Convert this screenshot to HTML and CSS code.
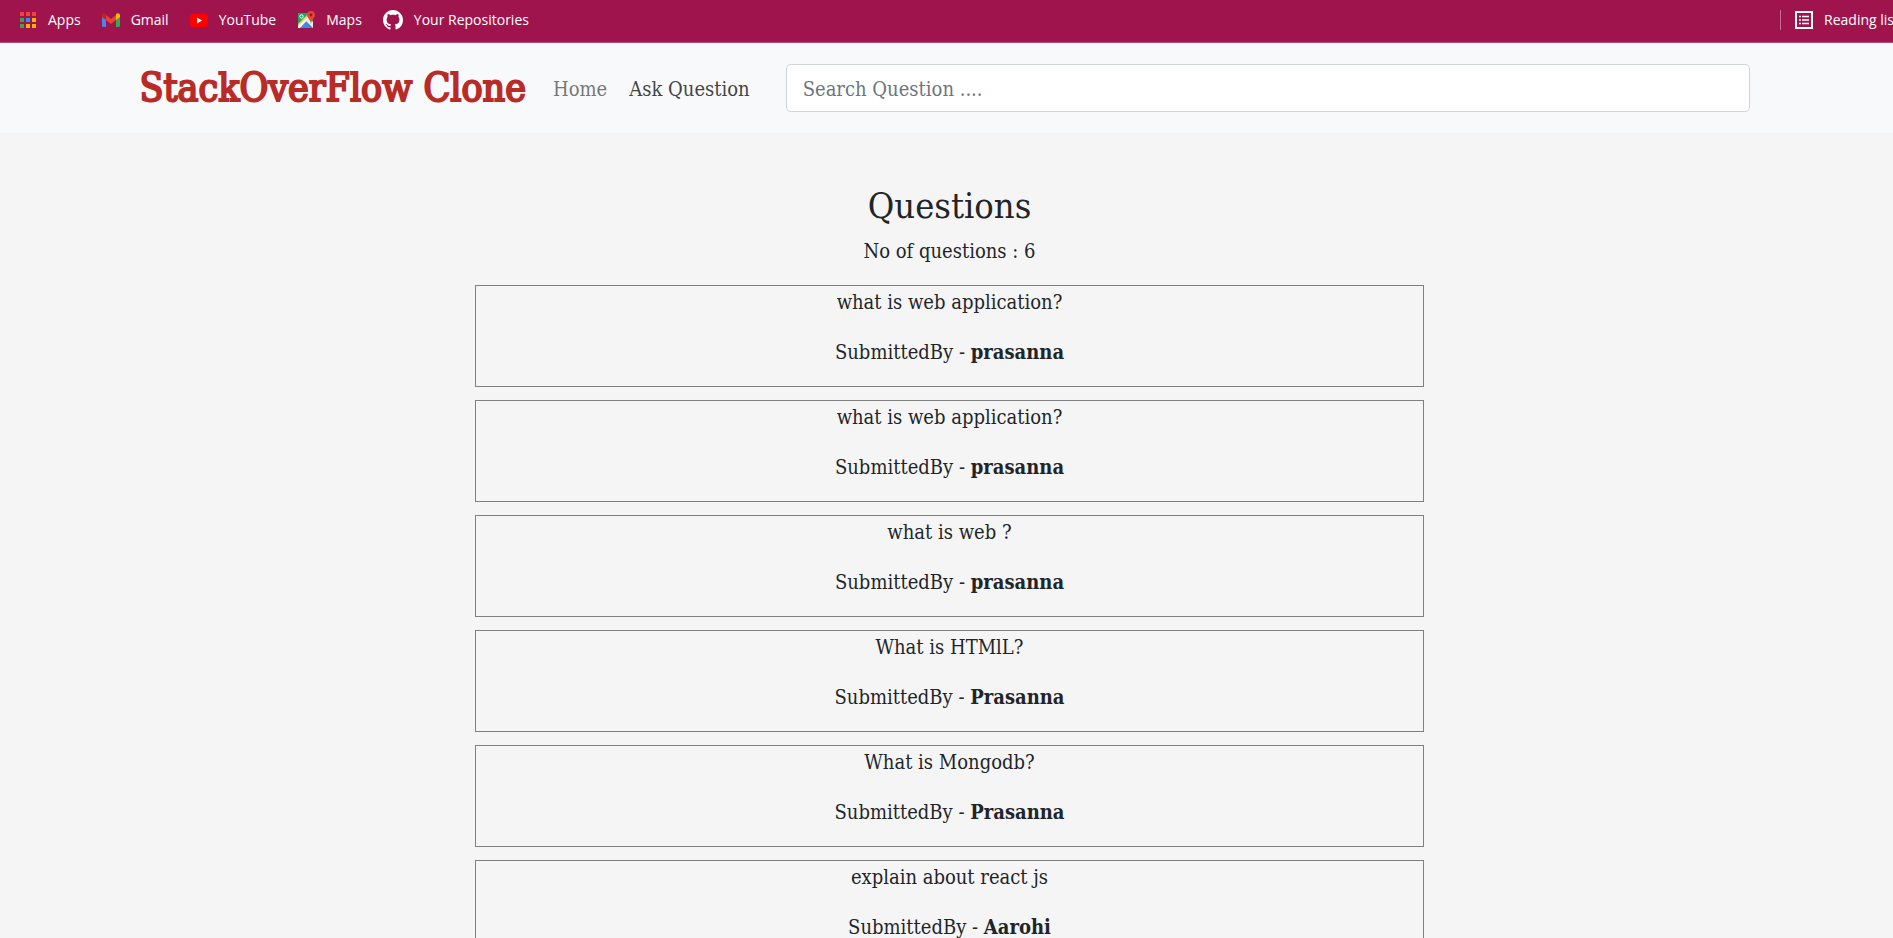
FILE: index.html
```html
<!DOCTYPE html>
<html lang="en">
<head>
<meta charset="utf-8">
<title>StackOverFlow Clone</title>
<link rel="stylesheet" href="styles.css">
</head>
<body>
<div class="page">
  <nav class="bookmarks" aria-label="Bookmarks">
    <a class="bookmark" href="#"><svg class="bookmark-icon" viewBox="0 0 18 18" aria-hidden="true"><path fill="#f44336" d="M1 1h4v4H1zM7 1h4v4H7zM13 1h4v4h-4z"/><path fill="#34a853" d="M1 7h4v4H1zM1 13h4v4H1z"/><path fill="#2196f3" d="M7 7h4v4H7z"/><path fill="#fbb30b" d="M13 7h4v4h-4zM7 13h4v4H7zM13 13h4v4h-4z"/></svg>Apps</a>
    <a class="bookmark" href="#"><svg class="bookmark-icon" viewBox="0 0 18 18" aria-hidden="true"><path fill="#4285f4" d="M0 5l4 3v8H1.300Q0 16 0 14.700z"/><path fill="#34a853" d="M18 5l-4 3v8h2.700q1.300 0 1.300-1.300z"/><path fill="#ea4335" d="M4 4l5 4 5-4v5l-5 4-5-4z"/><path fill="#c5221f" d="M0 6V4.500C0 2.300 2.200 1.600 4 3v6z"/><path fill="#fbbc04" d="M18 6V4.500C18 2.300 15.800 1.600 14 3v6z"/></svg>Gmail</a>
    <a class="bookmark" href="#"><svg class="bookmark-icon" viewBox="0 0 18 18" aria-hidden="true"><rect y="3" width="18" height="13" rx="3" fill="#f00"/><path fill="#fff" d="M7 6.500v6l5-3z"/></svg>YouTube</a>
    <a class="bookmark" href="#"><svg class="bookmark-icon" viewBox="0 0 18 18" aria-hidden="true"><path fill="#1fa463" d="M1 2h15v15H1z"/><path fill="#e8eaed" d="M9 10l3-3 4 4v6z"/><path fill="#4285f4" d="M3 17l6-6 6 6z"/><path fill="#ffd04b" d="M1 13L12 2h3L1 16z"/><path fill="#fff" d="M1 15L14 3l1 1L3 17H1z"/><circle cx="4.500" cy="5.500" r="1.700" fill="none" stroke="#fff"/><path fill="#ea4335" d="M14 0a4 4 0 0 0-4 4c0 3 3.500 4 4 9 .5-5 4-6 4-9a4 4 0 0 0-4-4z"/><circle cx="14" cy="4" r="1.400" fill="#8e2020"/></svg>Maps</a>
    <a class="bookmark" href="#"><svg class="bookmark-icon bookmark-icon-large" viewBox="0 0 16 16" aria-hidden="true"><path fill="#fff" d="M8 0C3.580 0 0 3.580 0 8c0 3.540 2.290 6.530 5.470 7.590.4.070.55-.17.55-.38 0-.19-.01-.82-.01-1.490-2.010.37-2.530-.49-2.690-.94-.09-.23-.48-.94-.82-1.130-.28-.15-.68-.52-.01-.53.63-.01 1.080.58 1.230.82.72 1.210 1.870.87 2.330.66.07-.52.28-.87.51-1.070-1.780-.2-3.640-.89-3.640-3.950 0-.87.31-1.590.82-2.150-.08-.2-.36-1.020.08-2.120 0 0 .67-.21 2.200.82.64-.18 1.320-.27 2-.27s1.360.09 2 .27c1.530-1.040 2.200-.82 2.200-.82.44 1.100.16 1.920.08 2.120.51.56.82 1.270.82 2.150 0 3.070-1.870 3.750-3.650 3.950.29.25.54.73.54 1.480 0 1.070-.01 1.930-.01 2.200 0 .21.15.46.55.38A8.010 8.010 0 0 0 16 8c0-4.420-3.580-8-8-8z"/></svg>Your Repositories</a>
    <button class="reading-list" type="button"><svg class="bookmark-icon" viewBox="0 0 18 18" aria-hidden="true"><path d="M1 1h16v16H1z" fill="none" stroke="#fff" stroke-width="2"/><path d="M4 5.500h2M4 9h2M4 12.500h2M7 5.500h7M7 9h7M7 12.500h7" stroke="#fff" stroke-width="1.500"/></svg>Reading list</button>
  </nav>
  <header class="navbar">
    <div class="navbar-inner">
      <a class="brand" href="#">StackOverFlow Clone</a>
      <a class="nav-link" href="#">Home</a>
      <a class="nav-link nav-link-active" href="#">Ask Question</a>
      <input class="search" type="search" aria-label="Search Question" placeholder="Search Question ....">
    </div>
  </header>
  <main class="questions">
    <h1 class="title">Questions</h1>
    <p class="line">No of questions : 6</p>
    <article class="question"><p class="line">what is web application?</p><p class="line">SubmittedBy - <b>prasanna</b></p></article>
    <article class="question"><p class="line">what is web application?</p><p class="line">SubmittedBy - <b>prasanna</b></p></article>
    <article class="question"><p class="line">what is web ?</p><p class="line">SubmittedBy - <b>prasanna</b></p></article>
    <article class="question"><p class="line">What is HTMlL?</p><p class="line">SubmittedBy - <b>Prasanna</b></p></article>
    <article class="question"><p class="line">What is Mongodb?</p><p class="line">SubmittedBy - <b>Prasanna</b></p></article>
    <article class="question"><p class="line">explain about react js</p><p class="line">SubmittedBy - <b>Aarohi</b></p></article>
  </main>
</div>
</body>
</html>
```
FILE: styles.css
```css
* { box-sizing: border-box; }
html { overflow: hidden; }
body {
  margin: 0;
  background: #f5f5f5;
  color: #212529;
  font: 20px/32px "Roboto Slab", "DejaVu Serif Condensed", "DejaVu Serif", serif;
}
a { text-decoration: none; }
.page { width: calc(100% + 6px); }
.bookmarks {
  display: flex;
  align-items: center;
  gap: 21px;
  height: 43px;
  padding: 0 0 3px 19px;
  background: #9f144d;
  border-bottom: 1px solid #b8487a;
  font: 14px/20px "Segoe UI", "Open Sans", "Noto Sans", sans-serif;
  white-space: nowrap;
}
.bookmark, .reading-list {
  display: flex;
  align-items: center;
  gap: 11px;
  color: #fff;
}
.bookmark-icon { width: 18px; height: 18px; flex: none; }
.bookmark-icon-large { width: 20px; height: 20px; }
.reading-list {
  margin-left: auto;
  padding: 0 0 0 14px;
  border: 0;
  border-left: 1px solid #c56b92;
  background: none;
  font: inherit;
}
.navbar { background: #f8f9fb; }
.navbar-inner {
  display: flex;
  align-items: center;
  max-width: 1650px;
  height: 90px;
  margin: 0 auto;
  padding: 0 25px 0 15px;
}
.brand {
  margin-right: 27px;
  color: #b92b27;
  font-size: 39px;
  line-height: 60px;
  white-space: nowrap;
  -webkit-text-stroke: 2px #b92b27;
}
.nav-link { margin-right: 22px; padding-top: 2px; color: #777; white-space: nowrap; }
.nav-link-active { margin-right: 36px; color: #444; }
.search {
  flex: 1;
  min-width: 0;
  height: 48px;
  padding: 2px 16px 0;
  border: 1px solid #ced4da;
  border-radius: 5px;
  background: #fff;
  color: #212529;
  font: inherit;
}
.search::placeholder { color: #6c757d; opacity: 1; }
.questions { width: 50%; margin: 0 auto; padding-top: 52px; text-align: center; }
.title { margin: 0 0 8px; font-size: 36px; font-weight: normal; line-height: 42px; }
.line { margin: 0 0 18px; }
.question { margin-bottom: 13px; border: 1px solid gray; }
```
